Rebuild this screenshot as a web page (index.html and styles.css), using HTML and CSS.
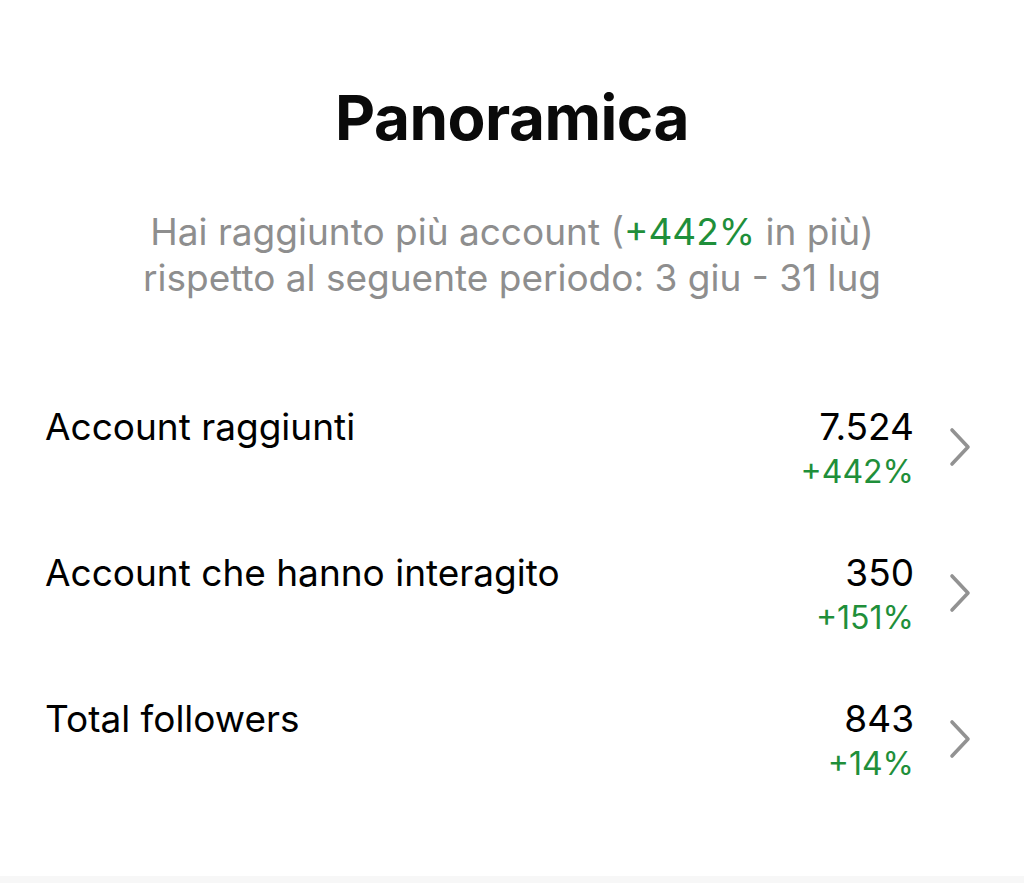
FILE: index.html
```html
<!DOCTYPE html>
<html lang="it">
<head>
<meta charset="utf-8">
<link rel="stylesheet" href="styles.css">
</head>
<body>
<main class="page">
  <h1 class="title">Panoramica</h1>
  <p class="subtitle">Hai raggiunto più account (<span class="up">+442%</span> in più)<br>rispetto al seguente periodo: 3 giu - 31 lug</p>
  <ul class="rows">
    <li class="row">
      <span class="label">Account raggiunti</span>
      <span class="stats"><span class="value">7.524</span><span class="delta">+442%</span></span>
      <svg class="chev" viewBox="0 0 24 40" width="24" height="40"><path d="M4 3 L20 20 L4 37" fill="none" stroke="#929292" stroke-width="3.6" stroke-linecap="round" stroke-linejoin="round"/></svg>
    </li>
    <li class="row">
      <span class="label">Account che hanno interagito</span>
      <span class="stats"><span class="value">350</span><span class="delta">+151%</span></span>
      <svg class="chev" viewBox="0 0 24 40" width="24" height="40"><path d="M4 3 L20 20 L4 37" fill="none" stroke="#929292" stroke-width="3.6" stroke-linecap="round" stroke-linejoin="round"/></svg>
    </li>
    <li class="row">
      <span class="label">Total followers</span>
      <span class="stats"><span class="value">843</span><span class="delta">+14%</span></span>
      <svg class="chev" viewBox="0 0 24 40" width="24" height="40"><path d="M4 3 L20 20 L4 37" fill="none" stroke="#929292" stroke-width="3.6" stroke-linecap="round" stroke-linejoin="round"/></svg>
    </li>
  </ul>
</main>
<div class="footer-strip"></div>
</body>
</html>
```
FILE: styles.css
```css
html, body {
  margin: 0;
  padding: 0;
  background: #ffffff;
}
body {
  font-family: Inter, "Noto Sans", "DejaVu Sans", sans-serif;
  color: #000000;
  height: 883px;
  display: flex;
  flex-direction: column;
  overflow: hidden;
}
.page {
  flex: 1;
  display: flex;
  flex-direction: column;
  align-items: stretch;
}
.title {
  margin: 76px 0 0;
  text-align: center;
  font-size: 62px;
  font-weight: 700;
  line-height: 84px;
  letter-spacing: -0.5px;
  color: #0a0a0a;
}
.subtitle {
  margin: 49px 0 0;
  text-align: center;
  font-size: 37px;
  line-height: 46px;
  color: #8e8e8e;
}
.up { color: #1f8f3a; }
.rows {
  list-style: none;
  margin: 104px 0 0;
  padding: 0 52px 0 45px;
  display: flex;
  flex-direction: column;
  gap: 56px;
}
.row {
  display: flex;
  align-items: flex-start;
  height: 90px;
}
.label {
  flex: 1;
  font-size: 37px;
  line-height: 44px;
}
.stats {
  display: flex;
  flex-direction: column;
  align-items: flex-end;
}
.value {
  font-size: 37px;
  line-height: 44px;
}
.delta {
  margin-top: 2px;
  font-size: 32px;
  line-height: 42px;
  color: #1f8f3a;
}
.chev {
  margin: 22px 0 0 34px;
}
.footer-strip {
  height: 7px;
  background: #f7f7f7;
}
```
